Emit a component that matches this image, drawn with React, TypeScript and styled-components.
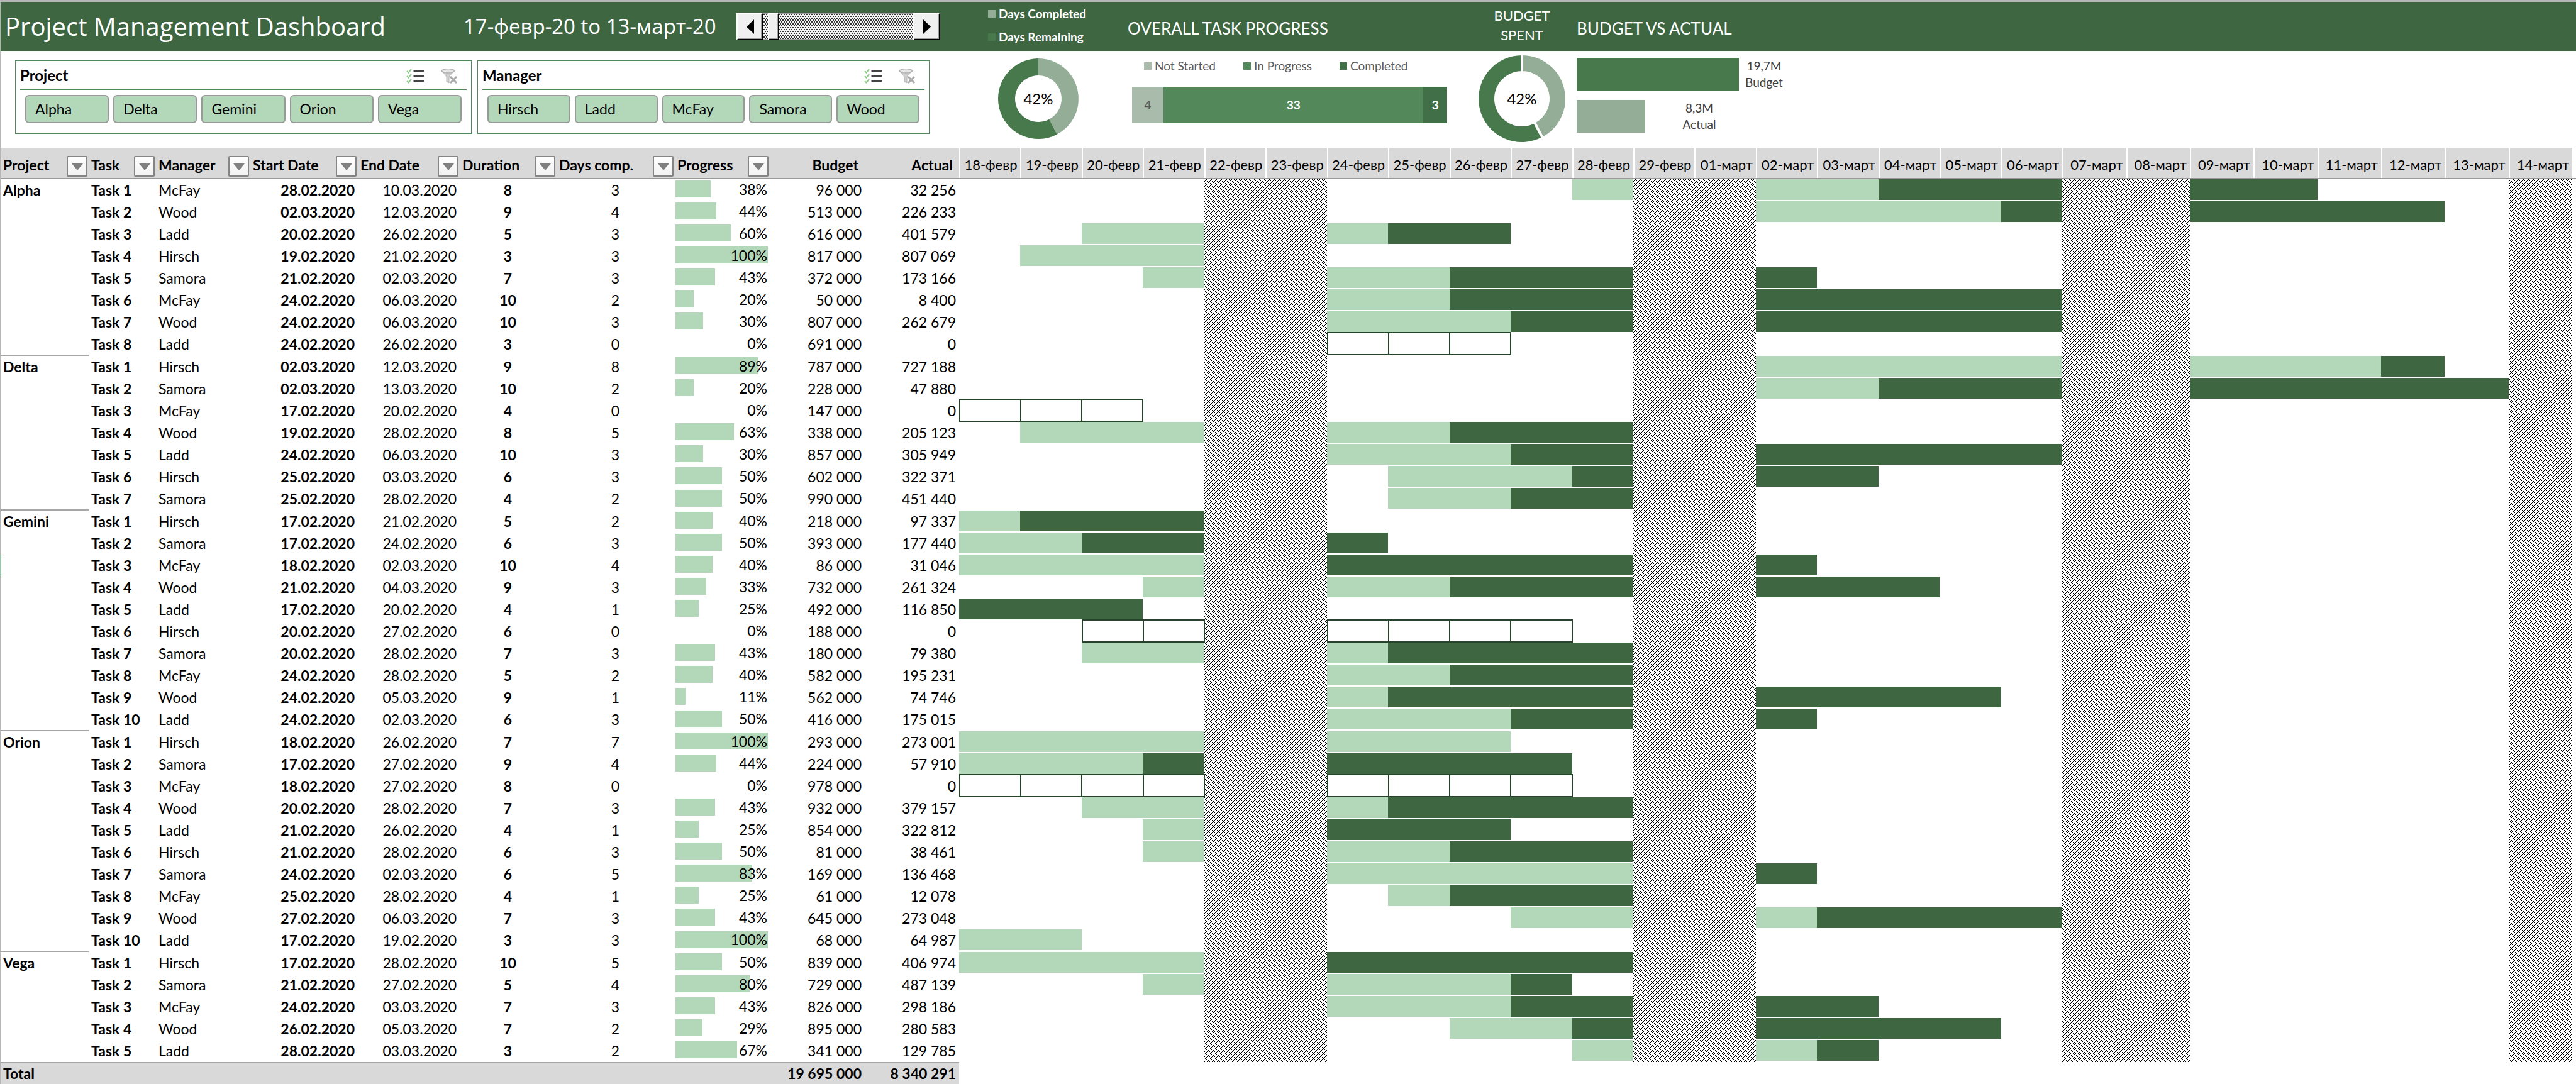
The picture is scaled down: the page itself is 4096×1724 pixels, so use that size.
import React from "react";
import styled, { createGlobalStyle, css } from "styled-components";

const color = {
  band: "#3d6641",
  mint: "#b3d8b9",
  leaf: "#47794c",
  sage: "#93ad96",
  haze: "#a9bcac",
  fern: "#52885a",
  moss: "#416f47",
  frame: "#4f8a5b",
  head: "#d9d9d9",
  rule: "#999999",
  edge: "#b5b5b5",
  box: "#28432b",
};

const sans = `Lato, "Open Sans", sans-serif`;
const display = `"Open Sans", "Noto Sans", sans-serif`;
const topColumns = "1524px 251px 564px 160px 1fr";
const ROW = 35;
const GROUP_END_ROW = 36;

const GlobalStyle = createGlobalStyle`
  *, *::before, *::after { box-sizing: border-box; }
  body { margin: 0; background: #fff; color: #000; font: 23px/1.2 ${sans}; }
  button, input { font: inherit; color: inherit; margin: 0; }
`;

/* ---------- data ---------- */

type Task = [manager: string, start: string, end: string, duration: number, done: number, percent: number, budget: number, actual: number];

const projects: { name: string; tasks: Task[] }[] = [
  {
    name: "Alpha",
    tasks: [
      ["McFay", "28.02.2020", "10.03.2020", 8, 3, 38, 96000, 32256],
      ["Wood", "02.03.2020", "12.03.2020", 9, 4, 44, 513000, 226233],
      ["Ladd", "20.02.2020", "26.02.2020", 5, 3, 60, 616000, 401579],
      ["Hirsch", "19.02.2020", "21.02.2020", 3, 3, 100, 817000, 807069],
      ["Samora", "21.02.2020", "02.03.2020", 7, 3, 43, 372000, 173166],
      ["McFay", "24.02.2020", "06.03.2020", 10, 2, 20, 50000, 8400],
      ["Wood", "24.02.2020", "06.03.2020", 10, 3, 30, 807000, 262679],
      ["Ladd", "24.02.2020", "26.02.2020", 3, 0, 0, 691000, 0],
    ],
  },
  {
    name: "Delta",
    tasks: [
      ["Hirsch", "02.03.2020", "12.03.2020", 9, 8, 89, 787000, 727188],
      ["Samora", "02.03.2020", "13.03.2020", 10, 2, 20, 228000, 47880],
      ["McFay", "17.02.2020", "20.02.2020", 4, 0, 0, 147000, 0],
      ["Wood", "19.02.2020", "28.02.2020", 8, 5, 63, 338000, 205123],
      ["Ladd", "24.02.2020", "06.03.2020", 10, 3, 30, 857000, 305949],
      ["Hirsch", "25.02.2020", "03.03.2020", 6, 3, 50, 602000, 322371],
      ["Samora", "25.02.2020", "28.02.2020", 4, 2, 50, 990000, 451440],
    ],
  },
  {
    name: "Gemini",
    tasks: [
      ["Hirsch", "17.02.2020", "21.02.2020", 5, 2, 40, 218000, 97337],
      ["Samora", "17.02.2020", "24.02.2020", 6, 3, 50, 393000, 177440],
      ["McFay", "18.02.2020", "02.03.2020", 10, 4, 40, 86000, 31046],
      ["Wood", "21.02.2020", "04.03.2020", 9, 3, 33, 732000, 261324],
      ["Ladd", "17.02.2020", "20.02.2020", 4, 1, 25, 492000, 116850],
      ["Hirsch", "20.02.2020", "27.02.2020", 6, 0, 0, 188000, 0],
      ["Samora", "20.02.2020", "28.02.2020", 7, 3, 43, 180000, 79380],
      ["McFay", "24.02.2020", "28.02.2020", 5, 2, 40, 582000, 195231],
      ["Wood", "24.02.2020", "05.03.2020", 9, 1, 11, 562000, 74746],
      ["Ladd", "24.02.2020", "02.03.2020", 6, 3, 50, 416000, 175015],
    ],
  },
  {
    name: "Orion",
    tasks: [
      ["Hirsch", "18.02.2020", "26.02.2020", 7, 7, 100, 293000, 273001],
      ["Samora", "17.02.2020", "27.02.2020", 9, 4, 44, 224000, 57910],
      ["McFay", "18.02.2020", "27.02.2020", 8, 0, 0, 978000, 0],
      ["Wood", "20.02.2020", "28.02.2020", 7, 3, 43, 932000, 379157],
      ["Ladd", "21.02.2020", "26.02.2020", 4, 1, 25, 854000, 322812],
      ["Hirsch", "21.02.2020", "28.02.2020", 6, 3, 50, 81000, 38461],
      ["Samora", "24.02.2020", "02.03.2020", 6, 5, 83, 169000, 136468],
      ["McFay", "25.02.2020", "28.02.2020", 4, 1, 25, 61000, 12078],
      ["Wood", "27.02.2020", "06.03.2020", 7, 3, 43, 645000, 273048],
      ["Ladd", "17.02.2020", "19.02.2020", 3, 3, 100, 68000, 64987],
    ],
  },
  {
    name: "Vega",
    tasks: [
      ["Hirsch", "17.02.2020", "28.02.2020", 10, 5, 50, 839000, 406974],
      ["Samora", "21.02.2020", "27.02.2020", 5, 4, 80, 729000, 487139],
      ["McFay", "24.02.2020", "03.03.2020", 7, 3, 43, 826000, 298186],
      ["Wood", "26.02.2020", "05.03.2020", 7, 2, 29, 895000, 280583],
      ["Ladd", "28.02.2020", "03.03.2020", 3, 2, 67, 341000, 129785],
    ],
  },
];

const DAY = 86400000;
const firstDay = Date.UTC(2020, 1, 18);
const dayCount = 26;

const days = Array.from({ length: dayCount }, (_, i) => {
  const d = new Date(firstDay + i * DAY);
  const month = d.getUTCMonth() === 1 ? "февр" : "март";
  return `${String(d.getUTCDate()).padStart(2, "0")}-${month}`;
});

const isWeekend = (index: number) => {
  const w = new Date(firstDay + index * DAY).getUTCDay();
  return w === 0 || w === 6;
};

const dayIndex = (text: string) => {
  const [d, m, y] = text.split(".").map(Number);
  return Math.round((Date.UTC(y, m - 1, d) - firstDay) / DAY);
};

type Kind = "done" | "left" | "idle";
type Run = { kind: Kind; start: number; span: number };

/* Splits a task's working days into unbroken runs of one kind. */
function runsOf(task: Task): Run[] {
  const [, start, , duration, done] = task;
  const runs: Run[] = [];
  let day = dayIndex(start);
  for (let n = 0; n < duration; day++) {
    if (isWeekend(day)) continue;
    const kind: Kind = done === 0 ? "idle" : n < done ? "done" : "left";
    n++;
    if (day < 0 || day >= dayCount) continue;
    const last = runs[runs.length - 1];
    if (last && last.kind === kind && last.start + last.span === day) last.span++;
    else runs.push({ kind, start: day, span: 1 });
  }
  return runs;
}

const weekends: Run[] = [];
for (let i = 0; i < dayCount; i++) {
  if (!isWeekend(i)) continue;
  const last = weekends[weekends.length - 1];
  if (last && last.start + last.span === i) last.span++;
  else weekends.push({ kind: "idle", start: i, span: 1 });
}

const money = (n: number) => String(n).replace(/\B(?=(\d{3})+$)/g, "\u00a0");

const rowHeights = projects
  .flatMap((p, pi) => p.tasks.map((_, ti) => (pi < projects.length - 1 && ti === p.tasks.length - 1 ? GROUP_END_ROW : ROW)))
  .map((h) => `${h}px`)
  .join(" ");

const allTasks = projects.flatMap((p) => p.tasks);

/* ---------- page and title band ---------- */

const Page = styled.main`
  border-left: 1px solid ${color.edge};
  min-height: 100vh;
  overflow: hidden;
`;

const Band = styled.header`
  display: grid;
  grid-template-columns: ${topColumns};
  height: 81px;
  border-top: 3px solid ${color.edge};
  background: ${color.band};
  color: #fff;
`;

const BandLead = styled.div`
  display: flex;
  align-items: center;
  padding-left: 7px;
  font-family: ${display};
`;

const Title = styled.h1`
  flex: 0 0 729px;
  margin: 0;
  font-size: 40px;
  line-height: 48px;
  font-weight: 400;
`;

const Period = styled.div`
  flex: 0 0 434px;
  font-size: 33px;
  line-height: 48px;
`;

const ScrollBar = styled.div`
  display: grid;
  grid-template-columns: 43px 1fr 43px;
  width: 324px;
  height: 44px;
`;

const raised = css`
  background: #f0f0f0;
  border: 2px solid #000;
  border-top-color: #fff;
  border-left-color: #fff;
  border-radius: 0;
  box-shadow: inset -2px -2px 0 #a0a0a0;
`;

const StepButton = styled.button`
  ${raised}
  display: grid;
  place-items: center;
  padding: 0;
`;

const speck = "conic-gradient(at 2px 2px, transparent 75%, #333 0)";

const Slider = styled.input`
  appearance: none;
  width: 100%;
  height: 44px;
  border: solid #a09fa0;
  border-width: 2px 0;
  background-color: #f4f4f4;
  background-image: ${speck}, ${speck};
  background-size: 4px 6px;
  background-position: 0 0, 2px 3px;
  &::-webkit-slider-thumb {
    appearance: none;
    width: 18px;
    height: 44px;
    ${raised}
  }
`;

const BandLegend = styled.ul`
  display: flex;
  flex-direction: column;
  gap: 13px;
  justify-content: center;
  margin: 0;
  padding: 0 0 4px 46px;
  list-style: none;
  font-size: 19px;
  line-height: 24px;
  font-weight: 700;
`;

const Legend = styled.ul`
  display: flex;
  gap: 44px;
  margin: 0;
  padding: 12px 0 0 43px;
  list-style: none;
  color: #595959;
  font-size: 19px;
  line-height: 24px;
`;

const LegendItem = styled.li<{ $color: string }>`
  display: flex;
  align-items: center;
  gap: 5px;
  white-space: nowrap;
  &::before {
    content: "";
    width: 12px;
    height: 12px;
    background: ${(p) => p.$color};
  }
`;

const ChartTitle = styled.h2<{ $inset: number }>`
  align-self: center;
  margin: 0;
  padding: 6px 0 0 ${(p) => p.$inset}px;
  font-size: 26px;
  line-height: 32px;
  font-weight: 400;
`;

const SmallTitle = styled.h2`
  place-self: center;
  width: 100px;
  margin: 0;
  padding-bottom: 4px;
  font-size: 22px;
  line-height: 31px;
  font-weight: 400;
  text-align: center;
`;

/* ---------- slicers and charts ---------- */

const Panels = styled.section`
  display: grid;
  grid-template-columns: ${topColumns};
  height: 154px;
`;

const Slicers = styled.div`
  display: flex;
  gap: 9px;
  padding: 15px 47px 22px 23px;
`;

const Slicer = styled.fieldset<{ $grow: number }>`
  flex: ${(p) => p.$grow} 1 0;
  min-width: 0;
  margin: 0;
  padding: 0;
  border: 1px solid ${color.frame};
`;

const SlicerHead = styled.div`
  display: flex;
  align-items: center;
  gap: 28px;
  height: 46px;
  margin: 0 7px;
  padding: 2px 14px 0 0;
  border-bottom: 1px solid ${color.frame};
  font-size: 24px;
  font-weight: 700;
`;

const SlicerName = styled.span`
  flex: 1;
`;

const IconButton = styled.button`
  display: block;
  padding: 0;
  border: 0;
  background: none;
  svg {
    display: block;
  }
`;

const Chips = styled.div`
  display: grid;
  grid-template-columns: repeat(5, 1fr);
  gap: 7px;
  padding: 8px 15px 0;
`;

const Chip = styled.button`
  height: 45px;
  padding: 1px 0 0 14px;
  border: 2px solid ${color.rule};
  border-radius: 6px;
  background: ${color.mint};
  font-size: 23px;
  text-align: left;
`;

const Centered = styled.div`
  display: grid;
  place-items: center;
  padding-bottom: 2px;
`;

const DonutText = styled.text`
  font: 24px ${sans};
  text-anchor: middle;
`;

const StackedBar = styled.div`
  display: flex;
  width: 501px;
  height: 58px;
  margin: 21px 0 0 24px;
  color: #fff;
  font-size: 19px;
  font-weight: 700;
`;

const StackedPart = styled.div<{ $share: number; $color: string; $muted?: boolean }>`
  flex: ${(p) => p.$share} 1 0;
  display: grid;
  place-items: center;
  background: ${(p) => p.$color};
  ${(p) => p.$muted && "color: #595959; font-weight: 400;"}
`;

const Totals = styled.div`
  display: grid;
  align-content: start;
  gap: 15px;
  padding: 11px 0 0 7px;
`;

const TotalItem = styled.div<{ $bar: number; $label: number; $color: string }>`
  display: grid;
  grid-template-columns: ${(p) => p.$bar}px ${(p) => p.$label}px;
  align-items: center;
  height: 52px;
  color: #404040;
  font-size: 19px;
  line-height: 26px;
  text-align: center;
  &::before {
    content: "";
    height: 52px;
    background: ${(p) => p.$color};
  }
`;

/* ---------- table ---------- */

const Body = styled.section`
  display: flex;
  align-items: flex-start;
`;

const Table = styled.table`
  flex: none;
  width: 1524px;
  table-layout: fixed;
  border-collapse: separate;
  border-spacing: 0;
`;

const Col = styled.col<{ $width: number }>`
  width: ${(p) => p.$width}px;
`;

const HeadCell = styled.th<{ $right?: boolean }>`
  height: 50px;
  padding: 0;
  background: ${color.head};
  border-bottom: 2px solid ${color.rule};
  vertical-align: top;
  text-align: ${(p) => (p.$right ? "right" : "left")};
`;

const HeadInner = styled.div<{ $right?: boolean }>`
  display: flex;
  align-items: flex-start;
  justify-content: ${(p) => (p.$right ? "flex-end" : "space-between")};
  padding: ${(p) => (p.$right ? "13px 10px 0 0" : "13px 2px 0 4px")};
  line-height: 28px;
  white-space: nowrap;
`;

const FilterButton = styled.button`
  display: grid;
  place-items: center;
  flex: none;
  width: 33px;
  height: 33px;
  padding: 2px 0 0;
  border: 2px solid #858585;
  border-radius: 2px;
  background: linear-gradient(#ffffff, #f1f1f1);
`;

const Row = styled.tr<{ $end?: boolean }>`
  height: ${(p) => (p.$end ? GROUP_END_ROW : ROW)}px;
`;

const Cell = styled.td<{ $align?: string; $bold?: boolean }>`
  padding: 0 5px 2px 4px;
  line-height: 28px;
  white-space: nowrap;
  text-align: ${(p) => p.$align ?? "left"};
  font-weight: ${(p) => (p.$bold ? 700 : 400)};
`;

const ProjectCell = styled(Cell)<{ $end?: boolean; $active?: boolean }>`
  padding-bottom: ${(p) => (p.$end ? 0 : 2)}px;
  border-bottom: ${(p) => (p.$end ? "2px solid #a6a6a6" : "0")};
  ${(p) => p.$active && `box-shadow: inset 1px 0 0 #217346;`}
`;

const ProgressCell = styled.td`
  padding: 0 3px 0 1px;
`;

const Progress = styled.div`
  display: grid;
  align-items: center;
  height: 33px;
  > * {
    grid-area: 1 / 1;
  }
`;

const ProgressFill = styled.span`
  align-self: start;
  height: 27px;
  margin-top: 1px;
  background: ${color.mint};
`;

const ProgressText = styled.span`
  padding: 0 1px 2px 0;
  text-align: right;
`;

const TotalCell = styled(Cell)`
  height: 35px;
  background: ${color.head};
  border-top: 2px solid #a6a6a6;
`;

/* ---------- gantt ---------- */

const Gantt = styled.div`
  flex: 1;
  min-width: 0;
`;

const dayGrid = css`
  display: grid;
  grid-template-columns: repeat(18, 25fr) repeat(8, 26fr);
  padding-right: 6px;
`;

const DayHead = styled.div`
  ${dayGrid}
  height: 50px;
  border-bottom: 2px solid ${color.rule};
`;

const Day = styled.div`
  padding: 13px 5px 0 0;
  border-left: 2px solid #fff;
  background: ${color.head};
  font-size: 22px;
  line-height: 28px;
  text-align: right;
  white-space: nowrap;
`;

const DayBody = styled.div`
  ${dayGrid}
  grid-template-rows: ${rowHeights};
`;

const dot = "conic-gradient(at 1px 1px, transparent 75%, #000 0)";

const Weekend = styled.div`
  grid-row: 1 / -1;
  background-image: ${dot}, ${dot}, ${dot}, ${dot};
  background-size: 4px 4px;
  background-position: 0 3px, 1px 2px, 2px 1px, 3px 0;
`;

const Bar = styled.div<{ $kind: Kind }>`
  align-self: start;
  height: 33px;
  background: ${(p) => (p.$kind === "done" ? color.mint : color.band)};
`;

const IdleRun = styled.div`
  display: flex;
  align-self: start;
  height: 37px;
  margin: -2px -1px 0 0;
  border: 2px solid ${color.box};
`;

const IdleDay = styled.div`
  flex: 1;
  & + & {
    border-left: 2px solid ${color.box};
  }
`;

/* ---------- drawings ---------- */

const Checklist = () => (
  <svg width="28" height="24" viewBox="0 0 28 24" fill="none">
    {[0, 8, 16].map((y) => (
      <g key={y}>
        <path d={`M1 ${y + 4}l2.5 2.5L8 ${y + 1}`} stroke="#8fc98a" strokeWidth="2" />
        <path d={`M11.500 ${y + 4}H28`} stroke="#444" strokeWidth="2" />
      </g>
    ))}
  </svg>
);

const ClearFilter = () => (
  <svg width="26" height="24" viewBox="0 0 26 24" fill="none">
    <path d="M1 4l7 9v8l4 2V13l8-9z" fill="#cfcfcf" stroke="#b5b5b5" />
    <ellipse cx="10.500" cy="3.800" rx="10" ry="3.200" fill="#e8e8e8" stroke="#b0b0b0" strokeWidth="1.400" />
    <path d="M14 13l10 10M24 13L14 23" stroke="#a9a9a9" strokeWidth="3" />
  </svg>
);

const Arrow = ({ left }: { left?: boolean }) => (
  <svg width="12" height="23" viewBox="0 0 12 23">
    <path d={left ? "M12 0v23L0 11.500z" : "M0 0v23l12-11.500z"} />
  </svg>
);

const Caret = () => (
  <svg width="18" height="11" viewBox="0 0 18 11">
    <path d="M0 0h18L9 11z" fill="#808080" />
  </svg>
);

function slice(from: number, to: number, outer: number, inner: number) {
  const at = (t: number, r: number) => `${(80 + r * Math.sin(t * 2 * Math.PI)).toFixed(2)} ${(76 - r * Math.cos(t * 2 * Math.PI)).toFixed(2)}`;
  const large = to - from > 0.5 ? 1 : 0;
  return `M${at(from, outer)}A${outer} ${outer} 0 ${large} 1 ${at(to, outer)}L${at(to, inner)}A${inner} ${inner} 0 ${large} 0 ${at(from, inner)}Z`;
}

function Donut({ share, outer, inner, gap }: { share: number; outer: number; inner: number; gap: number }) {
  const stroke = gap ? { stroke: "#fff", strokeWidth: gap } : {};
  return (
    <svg width="160" height="152" viewBox="0 0 160 152" role="img">
      <path d={slice(0, share, outer, inner)} fill={color.sage} {...stroke} />
      <path d={slice(share, 1, outer, inner)} fill={color.leaf} {...stroke} />
      <DonutText x="80" y="85">{Math.round(share * 100)}%</DonutText>
    </svg>
  );
}

/* ---------- parts ---------- */

function SlicerBox({ name, options, grow }: { name: string; options: string[]; grow: number }) {
  return (
    <Slicer $grow={grow} aria-label={name}>
      <SlicerHead>
        <SlicerName>{name}</SlicerName>
        <IconButton aria-label="Multi-select"><Checklist /></IconButton>
        <IconButton aria-label="Clear filter"><ClearFilter /></IconButton>
      </SlicerHead>
      <Chips>
        {options.map((o) => <Chip key={o}>{o}</Chip>)}
      </Chips>
    </Slicer>
  );
}

const columns: { label: string; width: number; plain?: boolean }[] = [
  { label: "Project", width: 140 },
  { label: "Task", width: 107 },
  { label: "Manager", width: 150 },
  { label: "Start Date", width: 171 },
  { label: "End Date", width: 162 },
  { label: "Duration", width: 154 },
  { label: "Days comp.", width: 188 },
  { label: "Progress", width: 151 },
  { label: "Budget", width: 151, plain: true },
  { label: "Actual", width: 150, plain: true },
];

function TaskTable() {
  return (
    <Table>
      <colgroup>
        {columns.map((c) => <Col key={c.label} $width={c.width} />)}
      </colgroup>
      <thead>
        <tr>
          {columns.map((c) => (
            <HeadCell key={c.label} scope="col" $right={c.plain}>
              <HeadInner $right={c.plain}>
                {c.label}
                {!c.plain && <FilterButton aria-label={`Filter ${c.label}`}><Caret /></FilterButton>}
              </HeadInner>
            </HeadCell>
          ))}
        </tr>
      </thead>
      {projects.map((p, pi) => (
        <tbody key={p.name}>
          {p.tasks.map((t, i) => {
            const [manager, start, end, duration, done, percent, budget, actual] = t;
            const last = i === p.tasks.length - 1 && pi < projects.length - 1;
            return (
              <Row key={i} $end={last}>
                <ProjectCell $bold $end={last} $active={p.name === "Gemini" && i === 2}>{i === 0 ? p.name : ""}</ProjectCell>
                <Cell $bold>Task {i + 1}</Cell>
                <Cell>{manager}</Cell>
                <Cell $bold $align="right">{start}</Cell>
                <Cell $align="right">{end}</Cell>
                <Cell $bold $align="center">{duration}</Cell>
                <Cell $align="center">{done}</Cell>
                <ProgressCell>
                  <Progress>
                    <ProgressFill style={{ width: `${percent}%` }} />
                    <ProgressText>{percent}%</ProgressText>
                  </Progress>
                </ProgressCell>
                <Cell $align="right">{money(budget)}</Cell>
                <Cell $align="right">{money(actual)}</Cell>
              </Row>
            );
          })}
        </tbody>
      ))}
      <tfoot>
        <tr>
          <TotalCell $bold colSpan={8}>Total</TotalCell>
          <TotalCell $bold $align="right">{money(19695000)}</TotalCell>
          <TotalCell $bold $align="right">{money(8340291)}</TotalCell>
        </tr>
      </tfoot>
    </Table>
  );
}

function GanttChart() {
  return (
    <Gantt>
      <DayHead>
        {days.map((d) => <Day key={d}>{d}</Day>)}
      </DayHead>
      <DayBody>
        {weekends.map((w) => (
          <Weekend key={w.start} style={{ gridColumn: `${w.start + 1} / span ${w.span}` }} />
        ))}
        {allTasks.map((t, row) =>
          runsOf(t).map((r) => {
            const place = { gridRow: row + 1, gridColumn: `${r.start + 1} / span ${r.span}` };
            return r.kind === "idle" ? (
              <IdleRun key={`${row}-${r.start}`} style={place}>
                {Array.from({ length: r.span }, (_, n) => <IdleDay key={n} />)}
              </IdleRun>
            ) : (
              <Bar key={`${row}-${r.start}`} $kind={r.kind} style={place} />
            );
          })
        )}
      </DayBody>
    </Gantt>
  );
}

export default function App() {
  return (
    <Page>
      <GlobalStyle />
      <Band>
        <BandLead>
          <Title>Project Management Dashboard</Title>
          <Period>17-февр-20 to 13-март-20</Period>
          <ScrollBar>
            <StepButton aria-label="Earlier"><Arrow left /></StepButton>
            <Slider type="range" min={0} max={100} defaultValue={3} aria-label="Period" />
            <StepButton aria-label="Later"><Arrow /></StepButton>
          </ScrollBar>
        </BandLead>
        <BandLegend>
          <LegendItem $color={color.sage}>Days Completed</LegendItem>
          <LegendItem $color={color.leaf}>Days Remaining</LegendItem>
        </BandLegend>
        <ChartTitle $inset={17}>OVERALL TASK PROGRESS</ChartTitle>
        <SmallTitle>BUDGET SPENT</SmallTitle>
        <ChartTitle $inset={7}>BUDGET VS ACTUAL</ChartTitle>
      </Band>
      <Panels>
        <Slicers>
          <SlicerBox name="Project" options={["Alpha", "Delta", "Gemini", "Orion", "Vega"]} grow={726} />
          <SlicerBox name="Manager" options={["Hirsch", "Ladd", "McFay", "Samora", "Wood"]} grow={719} />
        </Slicers>
        <Centered><Donut share={0.423} outer={64} inner={37} gap={0} /></Centered>
        <div>
          <Legend>
            <LegendItem $color={color.haze}>Not Started</LegendItem>
            <LegendItem $color={color.fern}>In Progress</LegendItem>
            <LegendItem $color={color.moss}>Completed</LegendItem>
          </Legend>
          <StackedBar>
            <StackedPart $share={4} $color={color.haze} $muted>4</StackedPart>
            <StackedPart $share={33} $color={color.fern}>33</StackedPart>
            <StackedPart $share={3} $color={color.moss}>3</StackedPart>
          </StackedBar>
        </div>
        <Centered><Donut share={0.423} outer={71} inner={42} gap={4} /></Centered>
        <Totals>
          <TotalItem $bar={258} $label={80} $color={color.leaf}>
            <span>19,7M<br />Budget</span>
          </TotalItem>
          <TotalItem $bar={109} $label={172} $color={color.sage}>
            <span>8,3M<br />Actual</span>
          </TotalItem>
        </Totals>
      </Panels>
      <Body>
        <TaskTable />
        <GanttChart />
      </Body>
    </Page>
  );
}
